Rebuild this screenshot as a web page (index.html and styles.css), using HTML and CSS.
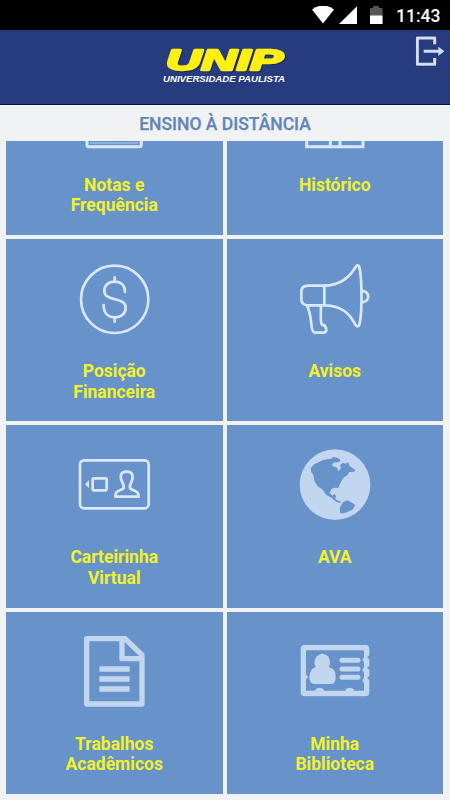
FILE: index.html
```html
<!DOCTYPE html>
<html lang="pt-BR">
<head>
<meta charset="utf-8">
<title>UNIP</title>
<link rel="stylesheet" href="styles.css">
</head>
<body>
<div class="status">
  <svg class="status-icons" viewBox="0 0 75 20" aria-hidden="true">
    <path fill="#fff" d="M0 3.5Q11-4.5 22 3.5L11 17.5z"/>
    <path fill="#fff" d="M45 .3V18H27z"/>
    <path fill="#555" d="M58 2h3V0h6v2h3.500v16H58z"/>
    <path fill="#fff" d="M58 9.500h12.500V18H58z"/>
  </svg>
  <span class="clock">11:43</span>
</div>
<header class="header">
  <svg class="logo" viewBox="0 0 130 42" role="img" aria-label="UNIP Universidade Paulista">
    <text class="logo-name" x="6" y="25" textLength="117" lengthAdjust="spacingAndGlyphs">UNIP</text>
    <text class="logo-sub" x="3" y="36.500" textLength="122" lengthAdjust="spacingAndGlyphs">UNIVERSIDADE PAULISTA</text>
  </svg>
  <svg class="exit" viewBox="0 0 96 100" aria-hidden="true">
    <path class="exit-shadow" d="M60 30V10H8V92H60V74"/>
    <path class="exit-line" d="M62 31V12H10V91H62V72M29 52H76"/>
    <path fill="#d3def5" d="M73 38L91 52L73 66z"/>
  </svg>
</header>
<h1 class="title">ENSINO À DISTÂNCIA</h1>
<main class="scroller">
  <div class="grid">
    <a class="tile"><svg class="icon" viewBox="-2 0 300 270"><rect x="67" y="100" width="163" height="139" rx="6" stroke-width="9"/><path d="M78 228H220" stroke-width="5" opacity=".45"/></svg><span>Notas e<br>Frequência</span></a>
    <a class="tile"><svg class="icon" viewBox="0 0 300 270"><path stroke-width="9" stroke-linejoin="miter" d="M65 100V239H234V100M136 100V239M165 100V239"/></svg><span>Histórico</span></a>

    <a class="tile"><svg class="icon" viewBox="-2 -3 300 270"><circle cx="150" cy="133" r="101"/><path d="M181 111C181 91 168 80 150 80C131 80 119 91 119 107C119 142 183 124 183 158C183 176 169 187 150 187C130 187 117 174 117 150M150 67V80M150 187V200"/></svg><span>Posição<br>Financeira</span></a>
    <a class="tile"><svg class="icon" viewBox="0 -3 300 270"><path d="M118 92H67Q49 94 49 110V133Q49 149 67 151H118ZM118 92C164 91 191 70 210 39Q216 27 222 33C232 66 232 182 222 211Q217 219 210 207C191 170 164 151 118 151M230 109C256 104 256 145 230 141M66 152Q75 169 79 207Q81 232 89 233H116Q127 231 123 219Q121 210 110 208Q106 201 108 153"/></svg><span>Avisos</span></a>

    <a class="tile"><svg class="icon" viewBox="-2 1 300 270"><rect x="46" y="62" width="206" height="144" rx="12"/><rect x="84" y="116" width="42" height="36" rx="3"/><path class="solid" d="M61 134L73 122V146z"/><path d="M152 171Q151 157 163 153L176 147Q180 141 174 130C163 110 168 96 186 96C205 96 208 111 199 130Q193 141 197 147L210 153Q223 158 222 171Z"/></svg><span>Carteirinha<br>Virtual</span></a>
    <a class="tile"><svg class="icon soft" viewBox="0 1 300 270"><circle class="solid" cx="150" cy="135" r="106"/><path class="land" d="M77 86L87 74L101 68L115 61L138 57L145 52L158 55L166 60L163 67L145 69L141 78L156 84L160 94L168 86L165 77L173 69L181 72L189 68L194 80L211 91L208 96L193 97L187 107L177 113L170 123L163 137L160 145L149 144L139 148L134 160L142 168L148 164L153 168L151 178L160 183L169 186L164 190L151 185L139 174L123 165L114 151L98 140L88 124L85 105L79 98ZM174 187L188 182L198 188L211 195L204 209L189 216L177 221L166 221L164 206Z"/></svg><span>AVA</span></a>

    <a class="tile"><svg class="icon soft" viewBox="-2 3 300 270"><path stroke-width="16" d="M66 41H181L232 90V237H66ZM172 43V101H230"/><path stroke-width="16" stroke-linecap="butt" d="M104 132H195M104 162H195M104 192H195"/></svg><span>Trabalhos<br>Acadêmicos</span></a>
    <a class="tile"><svg class="icon soft" viewBox="0 3 300 270"><path class="solid" fill-rule="evenodd" d="M59 60H241Q253 60 253 72V91L246 97L253 103V122L246 128L253 134V153L246 159L253 165V202Q253 214 241 214H59Q47 214 47 202V72Q47 60 59 60ZM66 76Q63 76 63 80V149L70 156L63 163V197H91Q92 189 104 188Q116 189 117 197H181Q182 189 194 188Q206 189 207 197H237V174L232 166L237 158V143L232 135L237 127V112L232 104L237 96V80Q237 76 233 76Z"/><path class="solid" d="M92 127Q84 111 94 96Q111 78 129 94Q139 108 132 127Q152 131 152 155Q153 177 137 177H88Q73 177 73 157Q74 131 92 127Z"/><path stroke-width="15" d="M171 106H219M171 132H219M171 157H219"/></svg><span>Minha<br>Biblioteca</span></a>
  </div>
</main>
</body>
</html>
```

FILE: styles.css
```css
* { box-sizing: border-box; }
body {
  margin: 0;
  height: 800px;
  overflow: hidden;
  display: flex;
  flex-direction: column;
  background: #f0f2f4;
  font-family: Roboto, sans-serif;
}
.status {
  flex: 0 0 30px;
  display: flex;
  justify-content: flex-end;
  align-items: flex-start;
  padding: 6px 9px 0 0;
  background: #000;
  color: #fff;
}
.status-icons { width: 75px; height: 20px; margin-right: 9px; }
.clock { width: 45px; font-size: 17.5px; font-weight: 500; line-height: 20px; white-space: nowrap; }
.header {
  flex: 0 0 75px;
  position: relative;
  display: flex;
  justify-content: center;
  padding-top: 15px;
  background: #273b7f;
  border-bottom: 1px solid #08104b;
}
.logo { width: 130px; height: 42px; overflow: visible; }
.logo-name {
  font: italic bold 30px "Liberation Sans", sans-serif;
  fill: #fff012;
  stroke: #fff012;
  stroke-width: 2.4px;
  stroke-linejoin: round;
  filter: drop-shadow(1px 1px 0 #142662);
}
.logo-sub { font: italic bold 9.3px "Liberation Sans", sans-serif; fill: #fff; }
.exit { position: absolute; top: 4px; right: 4.500px; width: 32px; height: 33.3px; }
.exit path { stroke-linejoin: round; }
.exit-line { fill: none; stroke: #d3def5; stroke-width: 9; }
.exit-shadow { fill: none; stroke: #15265f; stroke-width: 9; }
.title {
  flex: 0 0 36px;
  min-height: 0;
  height: 36px;
  margin: 0;
  color: #6385b7;
  font-size: 17.5px;
  font-weight: 500;
  line-height: 38px;
  text-align: center;
  -webkit-text-stroke: .25px;
}
.scroller {
  flex: 1;
  min-height: 0;
  overflow: hidden;
  display: flex;
  flex-direction: column;
  justify-content: flex-end;
  padding: 0 7px 6px 6px;
}
.grid {
  flex: none;
  display: grid;
  grid-template-columns: 1fr 1fr;
  grid-auto-rows: 182.3px;
  gap: 4px;
}
.tile {
  display: flex;
  flex-direction: column;
  align-items: center;
  padding-top: 14.6px;
  background: #6792ca;
  color: #f2f229;
  font-size: 17.5px;
  font-weight: 700;
  line-height: 20.5px;
  text-align: center;
}
.icon {
  width: 100px;
  height: 90px;
  margin-bottom: 17.3px;
  fill: none;
  stroke: #d9e8fb;
  stroke-width: 8;
  stroke-linecap: round;
  stroke-linejoin: round;
}
.icon .solid { fill: #d9e8fb; stroke: none; }
.soft { stroke: #c2d6ef; }
.soft .solid { fill: #c2d6ef; }
.icon .land { fill: #6792ca; stroke: none; }
```
